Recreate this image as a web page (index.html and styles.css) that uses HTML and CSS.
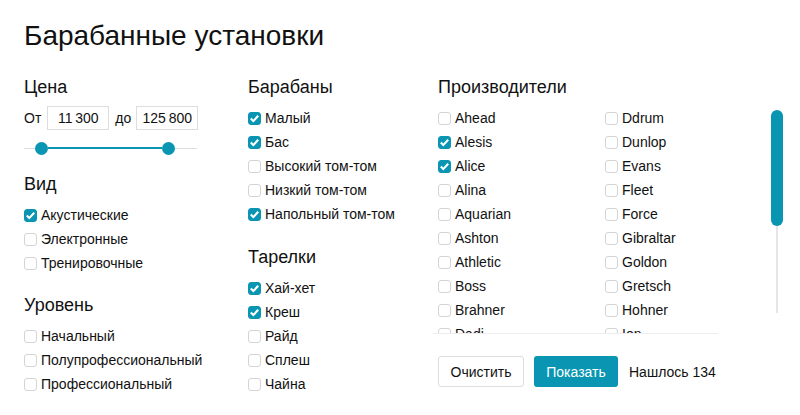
FILE: index.html
```html
<!DOCTYPE html>
<html lang="ru">
<head>
<meta charset="utf-8">
<link rel="stylesheet" href="styles.css">
</head>
<body>
<div class="page">
  <h1 class="title">Барабанные установки</h1>
  <div class="filters">
    <div class="col col-1">
      <section class="group">
        <h2 class="heading">Цена</h2>
        <div class="price">
          <span class="lbl">От</span>
          <span class="input">11&#8239;300</span>
          <span class="lbl lbl-to">до</span>
          <span class="input">125&#8239;800</span>
        </div>
        <div class="slider">
          <div class="track">
            <span class="knob"></span>
            <span class="range"></span>
            <span class="knob"></span>
          </div>
        </div>
      </section>
      <section class="group g-vid">
        <h2 class="heading">Вид</h2>
        <ul class="list">
          <li class="item on"><span class="box"></span>Акустические</li>
          <li class="item"><span class="box"></span>Электронные</li>
          <li class="item"><span class="box"></span>Тренировочные</li>
        </ul>
      </section>
      <section class="group g-lvl">
        <h2 class="heading">Уровень</h2>
        <ul class="list">
          <li class="item"><span class="box"></span>Начальный</li>
          <li class="item"><span class="box"></span>Полупрофессиональный</li>
          <li class="item"><span class="box"></span>Профессиональный</li>
        </ul>
      </section>
    </div>
    <div class="col col-2">
      <section class="group">
        <h2 class="heading">Барабаны</h2>
        <ul class="list">
          <li class="item on"><span class="box"></span>Малый</li>
          <li class="item on"><span class="box"></span>Бас</li>
          <li class="item"><span class="box"></span>Высокий том-том</li>
          <li class="item"><span class="box"></span>Низкий том-том</li>
          <li class="item on"><span class="box"></span>Напольный том-том</li>
        </ul>
      </section>
      <section class="group g-next">
        <h2 class="heading">Тарелки</h2>
        <ul class="list">
          <li class="item on"><span class="box"></span>Хай-хет</li>
          <li class="item on"><span class="box"></span>Креш</li>
          <li class="item"><span class="box"></span>Райд</li>
          <li class="item"><span class="box"></span>Сплеш</li>
          <li class="item"><span class="box"></span>Чайна</li>
        </ul>
      </section>
    </div>
    <div class="col col-3">
      <h2 class="heading">Производители</h2>
      <div class="brands-row">
        <div class="brands">
          <ul class="list">
            <li class="item"><span class="box"></span>Ahead</li>
            <li class="item on"><span class="box"></span>Alesis</li>
            <li class="item on"><span class="box"></span>Alice</li>
            <li class="item"><span class="box"></span>Alina</li>
            <li class="item"><span class="box"></span>Aquarian</li>
            <li class="item"><span class="box"></span>Ashton</li>
            <li class="item"><span class="box"></span>Athletic</li>
            <li class="item"><span class="box"></span>Boss</li>
            <li class="item"><span class="box"></span>Brahner</li>
            <li class="item"><span class="box"></span>Dadi</li>
          </ul>
          <ul class="list">
            <li class="item"><span class="box"></span>Ddrum</li>
            <li class="item"><span class="box"></span>Dunlop</li>
            <li class="item"><span class="box"></span>Evans</li>
            <li class="item"><span class="box"></span>Fleet</li>
            <li class="item"><span class="box"></span>Force</li>
            <li class="item"><span class="box"></span>Gibraltar</li>
            <li class="item"><span class="box"></span>Goldon</li>
            <li class="item"><span class="box"></span>Gretsch</li>
            <li class="item"><span class="box"></span>Hohner</li>
            <li class="item"><span class="box"></span>Ion</li>
          </ul>
        </div>
        <div class="scrollbar">
          <span class="thumb"></span>
          <span class="line"></span>
        </div>
      </div>
      <div class="actions">
        <button class="btn btn-clear">Очистить</button>
        <button class="btn btn-show">Показать</button>
        <span class="found">Нашлось 134</span>
      </div>
    </div>
  </div>
</div>
</body>
</html>
```

FILE: styles.css
```css
* { box-sizing: border-box; }
html, body { margin: 0; padding: 0; background: #fff; }
body {
  font-family: "Liberation Sans", Arial, sans-serif;
  color: #111;
  font-size: 14px;
  width: 800px;
  height: 415px;
  overflow: hidden;
}
.page { padding: 20px 0 0 24px; }
.title {
  margin: 0;
  font-weight: normal;
  font-size: 28px;
  line-height: 32px;
  height: 32px;
  color: #111;
}
.filters {
  display: flex;
  margin-top: 24px;
}
.col-1 { width: 173px; margin-right: 51px; }
.col-2 { width: 185px; }
.col-3 { width: 350px; }
.heading {
  margin: 0 0 8px;
  font-weight: normal;
  font-size: 18px;
  line-height: 22px;
  color: #111;
}
.col-3 > .heading { padding-left: 5px; }
.price {
  display: flex;
  align-items: center;
  height: 24px;
}
.lbl { font-size: 14px; margin-right: 6px; }
.lbl-to { margin-left: 6px; margin-right: 5px; }
.input {
  width: 62px;
  height: 24px;
  border: 1px solid #ddd;
  display: flex;
  align-items: center;
  justify-content: center;
  font-size: 14px;
  flex: none;
}
.slider { height: 24px; margin-top: 6px; display: flex; align-items: center; }
.track {
  width: 173px;
  display: flex;
  align-items: center;
  padding-left: 11px;
  height: 13px;
  background: linear-gradient(#ddd, #ddd) left center / 100% 1px no-repeat;
}
.knob {
  width: 13px;
  height: 13px;
  border-radius: 50%;
  background: #0a96b2;
  flex: none;
}
.range { width: 114px; height: 2px; background: #0a96b2; }
.g-vid { margin-top: 13px; }
.g-lvl { margin-top: 19px; }
.g-next { margin-top: 20px; }
.list { list-style: none; margin: 0; padding: 0; }
.item {
  height: 24px;
  display: flex;
  align-items: center;
  font-size: 14px;
  white-space: nowrap;
  color: #111;
}
.box {
  width: 13px;
  height: 13px;
  border: 1px solid #d4d4d4;
  border-radius: 3px;
  margin: 0 4px 0 0;
  flex: none;
  background: #fff;
}
.on .box {
  border-color: #0a96b2;
  background: #0a96b2 url("data:image/svg+xml,%3Csvg xmlns='http://www.w3.org/2000/svg' width='13' height='13'%3E%3Cpath d='M2.8 6.6 5.3 9.1 10.2 3.8' fill='none' stroke='%23fff' stroke-width='2.1'/%3E%3C/svg%3E") center / 13px 13px no-repeat;
}
.brands-row { display: flex; }
.brands {
  width: 285px;
  height: 228px;
  overflow: hidden;
  display: flex;
  padding-left: 5px;
  border-bottom: 1px solid #eee;
}
.brands .list { width: 167px; flex: none; }
.scrollbar {
  margin-left: 53px;
  margin-top: 4px;
  width: 12px;
  height: 203px;
  display: flex;
  flex-direction: column;
  align-items: center;
}
.thumb {
  width: 12px;
  height: 116px;
  border-radius: 6px;
  background: #0a96b2;
  flex: none;
}
.line { width: 2px; flex: 1; background: #e6e6e6; }
.actions {
  display: flex;
  align-items: center;
  margin-top: 22px;
  padding-left: 5px;
}
.btn {
  font-family: "Liberation Sans", Arial, sans-serif;
  font-size: 14px;
  height: 31px;
  border-radius: 3px;
  padding: 0;
  cursor: pointer;
}
.btn-clear {
  width: 86px;
  border: 1px solid #ddd;
  background: #fff;
  color: #111;
}
.btn-show {
  width: 84px;
  margin-left: 10px;
  border: 0;
  background: #0a96b2;
  color: #fff;
}
.found { margin-left: 11px; font-size: 14px; }
```
